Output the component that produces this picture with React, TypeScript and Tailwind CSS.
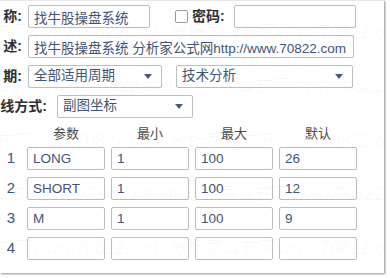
import React from 'react';

const FONT = "font-['Liberation_Sans','Noto_Sans_CJK_SC',sans-serif]";

const params = [
  { no: 1, name: 'LONG', min: '1', max: '100', def: '26' },
  { no: 2, name: 'SHORT', min: '1', max: '100', def: '12' },
  { no: 3, name: 'M', min: '1', max: '100', def: '9' },
  { no: 4, name: '', min: '', max: '', def: '' },
];

function Field({ value, className = '' }: { value: string; className?: string }) {
  return (
    <input
      readOnly
      value={value}
      className={`h-[23px] border border-[#bdbdbd] rounded-[2px] bg-white px-[5px] text-[13.5px] text-[#3f5478] outline-none ${className}`}
    />
  );
}

function Select({ value, className = '' }: { value: string; className?: string }) {
  return (
    <div
      className={`h-[23px] border border-[#bdbdbd] rounded-[2px] bg-white pl-[5px] pr-[9px] flex items-center justify-between text-[13.5px] text-[#3f5478] ${className}`}
    >
      <span>{value}</span>
      <svg width="8" height="5" viewBox="0 0 8 5">
        <path d="M0 0h8L4 5z" fill="#4a5a72" />
      </svg>
    </div>
  );
}

function Label({ text, className = '' }: { text: string; className?: string }) {
  return (
    <div className={`shrink-0 flex justify-end pr-[6px] text-[14px] font-bold text-[#2e2e2e] ${className}`}>
      {text}
    </div>
  );
}

export default function App() {
  return (
    <div className={`w-[390px] h-[278px] bg-white ${FONT}`}>
      <div className="relative w-[384px] h-[273px] bg-white border-t border-[#e6e6e6] shadow-[1px_1px_2px_rgba(0,0,0,0.45)] overflow-hidden">
        {/* form rows */}
        <div className="flex items-center mt-[4px]">
          <Label text="称:" className="w-[28px]" />
          <Field value="找牛股操盘系统" className="w-[122px]" />
          <div className="ml-[25px] w-[13px] h-[13px] border border-[#9a9a9a] rounded-[2px] bg-white" />
          <div className="ml-[4px] text-[14px] font-bold text-[#2e2e2e]">密码:</div>
          <Field value="" className="ml-[9px] w-[122px]" />
        </div>

        <div className="flex items-center mt-[7px]">
          <Label text="述:" className="w-[28px]" />
          <Field value="找牛股操盘系统 分析家公式网http://www.70822.com" className="w-[326px] pr-[2px]" />
        </div>

        <div className="flex items-center mt-[7px]">
          <Label text="期:" className="w-[28px]" />
          <Select value="全部适用周期" className="w-[134px]" />
          <Select value="技术分析" className="ml-[14px] w-[177px]" />
        </div>

        <div className="flex items-center mt-[7px]">
          <Label text="线方式:" className="w-[57px] pr-[10px]" />
          <Select value="副图坐标" className="w-[136px]" />
        </div>

        {/* parameter table */}
        <div className="grid grid-cols-[21px_78px_78px_78px_78px] gap-x-[6px] mt-[8px] text-[13px] text-[#4a4a4a]">
          <div />
          <div className="text-center h-[16px] leading-[16px]">参数</div>
          <div className="text-center h-[16px] leading-[16px]">最小</div>
          <div className="text-center h-[16px] leading-[16px]">最大</div>
          <div className="text-center h-[16px] leading-[16px]">默认</div>
        </div>

        <div className="mt-[5px] flex flex-col gap-[7px]">
          {params.map(p => (
            <div key={p.no} className="grid grid-cols-[21px_78px_78px_78px_78px] gap-x-[6px] items-center">
              <div className="text-center text-[15px] text-[#3f5478] pl-[1px]">{p.no}</div>
              <Field value={p.name} className="w-[78px]" />
              <Field value={p.min} className="w-[78px]" />
              <Field value={p.max} className="w-[78px]" />
              <Field value={p.def} className="w-[78px]" />
            </div>
          ))}
        </div>

        {/* watermark */}
        <div className="absolute inset-0 pointer-events-none text-[18px] text-[#000000]/[0.03] whitespace-nowrap">
          {[18, 72, 127, 180, 234].map((top, i) => (
            <div key={top} className="absolute left-0 right-0" style={{ top, marginLeft: i % 2 ? -62 : -76 }}>
              分析家公式网www.70822.com 分析家公式网www.70822.com 分析家公式网www.70822.com
            </div>
          ))}
        </div>
      </div>
    </div>
  );
}
